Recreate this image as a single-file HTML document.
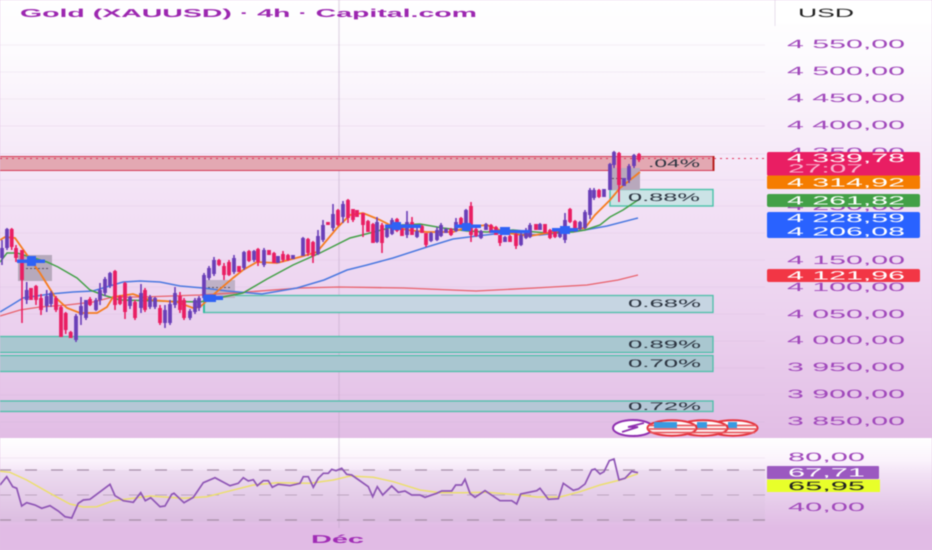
<!DOCTYPE html>
<html lang="fr">
<head>
<meta charset="utf-8">
<title>Gold (XAUUSD) - 4h - Capital.com</title>
<style>
html,body{margin:0;padding:0;width:932px;height:550px;overflow:hidden;background:#e2bde5}
svg{display:block;position:absolute;left:0;top:0;filter:blur(.4px)}
text{font-family:"Liberation Sans",sans-serif;text-rendering:geometricPrecision}
.ax{font-size:12px;fill:#a048bb}
.tg{font-size:12px;fill:#fff}
.zn{font-size:11px;fill:#2c3440}
</style>
</head>
<body>
<svg width="932" height="550" viewBox="0 0 932 550" xmlns="http://www.w3.org/2000/svg">
<defs>
<linearGradient id="m" x1="0" y1="0" x2="0" y2="1">
<stop offset="0" stop-color="#ffffff"/><stop offset=".12" stop-color="#fdfbfe"/><stop offset=".45" stop-color="#f3e2f6"/><stop offset=".75" stop-color="#ebd0ee"/><stop offset="1" stop-color="#e2bde5"/>
</linearGradient>
<linearGradient id="r" x1="0" y1="0" x2="0" y2="1">
<stop offset="0" stop-color="#ffffff"/><stop offset=".25" stop-color="#fbf3fc"/><stop offset=".4" stop-color="#f2e2f5"/><stop offset=".72" stop-color="#e6cbea"/><stop offset="1" stop-color="#e1bbe5"/>
</linearGradient>
<linearGradient id="b" x1="0" y1="0" x2="0" y2="1">
<stop offset="0" stop-color="#eddcf0"/><stop offset="1" stop-color="#dcbde1"/>
</linearGradient>
</defs>

<rect width="932" height="438" fill="url(#m)"/>
<rect y="438" width="932" height="112" fill="#e1bbe5"/>
<rect y="438" width="932" height="90" fill="url(#r)"/>
<rect y="470" width="765" height="52" fill="url(#b)"/>

<!-- grid -->
<path d="M0 45H765M0 72H765M0 99H765M0 126H765M0 154H765M0 180H765M0 206H765M0 233H765M0 260H765M0 287H765M0 314H765M0 341H765M0 368H765M0 395H765M0 422H765M0 458H765" stroke="#c9a8cf" stroke-opacity=".16" fill="none"/>
<path d="M339 0V528" stroke="#bfa6c6" stroke-opacity=".4" stroke-width="1.4"/>
<path d="M775 0V26" stroke="#e9e0ec"/>

<!-- zones -->
<rect x="-2" y="156.5" width="715" height="14" fill="#e3a8b2" stroke="#d33a55" stroke-width="1"/>
<path d="M713.5 156V171" stroke="#b8201f" stroke-width="2"/>
<path d="M0 158.5H765" stroke="#e0305a" stroke-width="1" stroke-dasharray="2 4"/>
<rect x="610" y="189.5" width="103" height="16.5" fill="#cbe3e6" stroke="#49c2a9" stroke-width="1.4"/>
<rect x="204" y="295.5" width="509" height="17" fill="#c6d5e2" stroke="#4dbfa9" stroke-width="1.3"/>
<path d="M204 295V313" stroke="#33bb9f" stroke-width="2"/>
<rect x="-2" y="336.5" width="715" height="16" fill="#a9c7d0" stroke="#4dbfa9" stroke-width="1.3"/>
<rect x="-2" y="355.5" width="715" height="16" fill="#a9c6d0" stroke="#4dbfa9" stroke-width="1.3"/>
<rect x="-2" y="401" width="715" height="10.5" fill="#b5c7d6" stroke="#4dbfa9" stroke-width="1.3"/>

<!-- grey boxes -->
<rect x="18" y="255" width="34" height="26" fill="#b6a9bc"/>
<rect x="206" y="280" width="29" height="18" fill="#bfb1c6"/>
<rect x="610" y="168" width="30" height="22" fill="#b8a8bc"/>
<path d="M26 268.500H49M208 287.500H232M612 178.500H630" stroke="#5b5060" stroke-width="1" stroke-dasharray="2 2"/>

<!-- moving averages -->
<path d="M0 316L20 310 40 307 67 305 93 302 113 297 143 297 200 295 233 293 300 288 339 287 404 288 476 291 535 288 587 285 618 280 638 275" fill="none" stroke="#e8606a" stroke-width="1.300"/>
<path d="M0 312L10 306 23 298 50 294 73 292 93 291 113 285 123 282 140 281 160 282 180 286 203 288 227 291 262 294 297 288 324 280 347 270 367 265 393 258 427 247 453 239 477 236 503 233 540 235 567 232 585 230 607 226 638 218" fill="none" stroke="#4a78e0" stroke-width="1.500"/>
<path d="M0 262L7 253 17 253 47 262 58 267 77 278 90 290 103 295 120 300 200 302 223 297 243 293 267 279 293 265 320 253 350 238 370 233 400 225 420 224 443 228 467 231 487 232 513 230 547 233 573 232 585 230 600 225 610 217 623 210 638 200" fill="none" stroke="#43a047" stroke-width="1.500"/>
<path d="M0 240L5 237 15 238 27 255 40 273 55 297 67 308 80 313 97 313 107 307 113 297 133 294 150 300 177 302 193 308 200 307 213 295 233 278 243 270 257 262 277 263 300 257 317 252 337 228 350 215 363 213 380 220 390 225 407 230 427 232 453 232 467 227 487 225 507 233 530 236 547 233 567 230 585 228 595 215 610 200 620 188 640 172" fill="none" stroke="#f57c1f" stroke-width="1.800"/>

<!-- candles purple -->
<path fill="none" stroke="#6a3fb8" stroke-width="1.600" d="M2 240V265M7 228V250M26.700 282V304M46.700 290V312M51 291V307M76 314V342M81 297V325M86 300V320M96 298V311M100 283V305M105 277V296M110 272V288M130 296V309M141 284V313M150 295V309M155 297V309M165 305V328M170 300V325M175 287V308M190 309V320M195 298V314M199 296V311M204 273V300M209 266V280M214 257V276M234 255V274M244 251V270M254 250V262M264 248V267M278 256V263M293 255V259M303 237V256M318 230V255M323 220V242M333 204V231M343 201V223M377 217V243M387 227V238M392 218V235M407 211V238M417 228V238M431 232V242M437 227V241M441 223V237M446 228V233M456 218V232M466 209V223M481 230V239M486 223V230M505 236V242M521 230V246M526 228V239M530 223V238M540 223V230M560 230V238M565 213V243M580 221V230M585 210V229M590 188V219M594 188V200M604 189V197M610 163V190M614 151V168M624 178V186M629 164V183M634 154V168"/>
<path fill="none" stroke="#6a3fb8" stroke-width="3.800" d="M2 248V258M7 229V248M26.700 290V300M46.700 296V306M51 293V304M76 316V340M81 306V315M86 300V318M96 300V310M100 290V300M105 279V293M110 273V286M130 297V306M141 293V308M150 297V307M155 298V307M165 310V323M170 304V323M175 293V305M190 311V318M195 300V312M199 298V308M204 275V298M209 268V278M214 260V274M234 258V272M244 252V268M254 251V260M264 250V265M278 256V263M293 255V259M303 238V256M318 236V254M323 225V240M333 214V228M343 204V217M377 222V242M387 229V237M392 220V234M407 222V235M417 231V237M431 233V241M437 230V240M441 225V236M446 229V233M456 222V231M466 210V223M481 231V238M486 224V230M505 237V242M521 235V245M526 230V238M530 225V237M540 224V230M560 231V237M565 220V240M580 222V229M585 212V228M590 190V215M594 190V198M604 189V197M610 164V190M614 152V165M624 178V186M629 166V180M634 155V166"/>
<!-- candles pink -->
<path fill="none" stroke="#e91e63" stroke-width="1.600" d="M11.700 228V250M16 245V262M22 250V323M31 288V300M36 285V305M41 294V315M56 296V312M61 306V337M65.700 312V334M70.700 331V338M90 297V306M115 270V310M120 295V305M125 282V319M135 300V320M145 288V312M160 305V325M180 292V313M184 298V320M219 259V266M224 263V280M229 260V276M239 266V272M249 250V262M258 248V266M269 250V255M274 252V263M283 251V262M288 254V261M308 238V256M313 241V263M328 222V225M338 209V226M348 199V223M353 209V222M357 210V217M363 213V237M368 220V232M373 223V243M382 223V253M397 218V232M402 228V236M412 217V235M422 225V233M426 233V247M451 228V236M461 217V225M471 202V242M476 228V237M491 224V233M496 226V235M500 235V246M510 235V242M516 233V249M536 224V230M545 224V233M550 229V239M555 229V238M570 208V223M575 220V232M599 189V198M619 152V202M639 153V162"/>
<path fill="none" stroke="#e91e63" stroke-width="3.800" d="M11.700 229V247M16 248V258M22 250V280M31 288V300M36 286V300M41 298V310M56 298V310M61 307V337M65.700 313V330M70.700 332V338M90 299V305M115 271V305M120 296V304M125 283V312M135 302V318M145 290V310M160 308V323M180 296V310M184 300V318M219 260V265M224 266V275M229 262V275M239 266V272M249 251V261M258 249V262M269 250V255M274 253V263M283 254V260M288 255V260M308 239V253M313 242V256M328 222V225M338 210V225M348 200V218M353 209V220M357 210V217M363 213V225M368 221V232M373 224V243M382 225V243M397 219V231M402 229V236M412 222V235M422 226V233M426 233V245M451 229V235M461 218V225M471 206V235M476 229V236M491 225V233M496 227V235M500 235V243M510 236V242M516 234V246M536 224V230M545 224V233M550 230V238M555 230V237M570 209V222M575 221V231M599 190V197M619 153V185M639 154V160"/>

<!-- blue markers -->
<g fill="#2f62f5">
<rect x="17" y="259.500" width="28" height="3.500"/><rect x="27" y="256" width="9" height="10"/>
<rect x="203" y="296" width="20" height="4"/><rect x="204" y="294.500" width="12" height="7.500"/>
<rect x="385" y="224.500" width="36" height="3.500"/><rect x="392" y="222" width="9" height="8"/>
<rect x="455" y="224.500" width="26" height="3.500"/><rect x="462" y="223" width="9" height="8"/>
<rect x="490" y="230" width="40" height="3"/><rect x="500" y="227" width="10" height="8"/>
<rect x="552" y="228" width="26" height="3.500"/><rect x="560" y="226" width="10" height="8"/>
</g>

<!-- zone labels -->
<text class="zn" x="648" y="167" textLength="52" lengthAdjust="spacingAndGlyphs">.04%</text>
<text class="zn" x="628" y="201" textLength="72" lengthAdjust="spacingAndGlyphs">0.88%</text>
<text class="zn" x="628" y="307" textLength="73" lengthAdjust="spacingAndGlyphs">0.68%</text>
<text class="zn" x="628" y="348" textLength="73" lengthAdjust="spacingAndGlyphs">0.89%</text>
<text class="zn" x="628" y="367" textLength="73" lengthAdjust="spacingAndGlyphs">0.70%</text>
<text class="zn" x="628" y="410" textLength="73" lengthAdjust="spacingAndGlyphs">0.72%</text>

<!-- header -->
<text x="20" y="17" font-size="11.500" font-weight="700" fill="#9c27b0" textLength="457" lengthAdjust="spacingAndGlyphs">Gold (XAUUSD) · 4h · Capital.com</text>
<rect x="776" y="0" width="156" height="24" fill="#ffffff" fill-opacity=".7"/>
<text x="798" y="17" font-size="12" fill="#222" textLength="56" lengthAdjust="spacingAndGlyphs">USD</text>

<!-- price axis -->
<g class="ax">
<text class="ax" x="787" y="48" textLength="118" lengthAdjust="spacingAndGlyphs">4 550,00</text>
<text class="ax" x="787" y="75" textLength="118" lengthAdjust="spacingAndGlyphs">4 500,00</text>
<text class="ax" x="787" y="102" textLength="118" lengthAdjust="spacingAndGlyphs">4 450,00</text>
<text class="ax" x="787" y="129" textLength="118" lengthAdjust="spacingAndGlyphs">4 400,00</text>
<text class="ax" x="787" y="156" textLength="118" lengthAdjust="spacingAndGlyphs">4 350,00</text>
<text class="ax" x="787" y="210" textLength="118" lengthAdjust="spacingAndGlyphs">4 250,00</text>
<text class="ax" x="787" y="264" textLength="118" lengthAdjust="spacingAndGlyphs">4 150,00</text>
<text class="ax" x="787" y="291" textLength="118" lengthAdjust="spacingAndGlyphs">4 100,00</text>
<text class="ax" x="787" y="318" textLength="118" lengthAdjust="spacingAndGlyphs">4 050,00</text>
<text class="ax" x="787" y="344" textLength="118" lengthAdjust="spacingAndGlyphs">4 000,00</text>
<text class="ax" x="787" y="371" textLength="118" lengthAdjust="spacingAndGlyphs">3 950,00</text>
<text class="ax" x="787" y="398" textLength="118" lengthAdjust="spacingAndGlyphs">3 900,00</text>
<text class="ax" x="787" y="425" textLength="118" lengthAdjust="spacingAndGlyphs">3 850,00</text>
</g>

<!-- price tags -->
<rect x="767" y="152" width="153" height="24" rx="2" fill="#e91e63"/>
<rect x="767" y="175.500" width="153" height="13.500" rx="1.500" fill="#f57c00"/>
<rect x="767" y="194" width="153" height="13" rx="2" fill="#43a047"/>
<rect x="767" y="212" width="153" height="26" rx="2" fill="#2962ff"/>
<rect x="767" y="269" width="153" height="13" rx="2" fill="#f23645"/>
<text class="tg" x="787" y="162" textLength="118" lengthAdjust="spacingAndGlyphs">4 339,78</text>
<text class="tg" x="788" y="172.500" textLength="75" lengthAdjust="spacingAndGlyphs" style="fill:#f8b4cf">27:07</text>
<text class="tg" x="787" y="186.500" textLength="118" lengthAdjust="spacingAndGlyphs">4 314,92</text>
<text class="tg" x="787" y="204.500" textLength="118" lengthAdjust="spacingAndGlyphs">4 261,82</text>
<text class="tg" x="787" y="222" textLength="118" lengthAdjust="spacingAndGlyphs">4 228,59</text>
<text class="tg" x="787" y="235.500" textLength="118" lengthAdjust="spacingAndGlyphs">4 206,08</text>
<text class="tg" x="787" y="279.500" textLength="118" lengthAdjust="spacingAndGlyphs">4 121,96</text>

<!-- event badges -->
<ellipse cx="733" cy="428" rx="24.500" ry="7.700" fill="#fff" stroke="#e5323c" stroke-width="2"/>
<path d="M710 425.500H756M709 429H757M711 432.500H755" stroke="#e85a60" stroke-width="1.800"/>
<rect x="728" y="422" width="9" height="6" fill="#3a9ae0"/>
<ellipse cx="703" cy="428" rx="24.500" ry="7.700" fill="#fff" stroke="#e5323c" stroke-width="2"/>
<path d="M680 425.500H726M679 429H727M681 432.500H725" stroke="#e85a60" stroke-width="1.800"/>
<rect x="697" y="422" width="10" height="6" fill="#3a9ae0"/>
<ellipse cx="633" cy="428" rx="20" ry="8" fill="#fff" stroke="#8e2fb0" stroke-width="2"/>
<path d="M622 432L638 427 628 427 644 423" fill="none" stroke="#8e2fb0" stroke-width="1.800"/>
<ellipse cx="672" cy="428" rx="24.500" ry="7.700" fill="#fff" stroke="#e5323c" stroke-width="2"/>
<path d="M649 425.500H695M648 429H696M650 432.500H694" stroke="#e85a60" stroke-width="1.800"/>
<rect x="654" y="422" width="23" height="6" fill="#3a9ae0"/>

<!-- RSI dashes -->
<path d="M-1 470H765M-1 520H765" stroke="#a78fa9" stroke-width="1.200" stroke-dasharray="12 14" fill="none"/>
<path d="M-1 495H765" stroke="#bda6c0" stroke-width="1" stroke-dasharray="12 14" fill="none"/>

<!-- RSI lines -->
<path fill="none" stroke="#ecdf6e" stroke-width="1.500" d="M0 471.300L10 472.300 26.700 480 50 493.300 70 504 83.300 507 96.700 506.700 113.300 500.700 133.300 498.300 150 496 183.300 498.300 206.700 496.700 226.700 491.700 253.300 485 276.700 482.700 310 483.300 333.300 480 350 476 373.300 477.300 393.300 481.700 420 490 440 492.700 463 492.700 486.700 492.300 520 495 536.700 497 560 497 580 491.700 600 485 620 480 638 473.700"/>
<path fill="none" stroke="#8e55b5" stroke-width="1.700" d="M0 485L6.700 476.700 12.700 486.700 16.700 488.300 21.700 506 26.700 502.700 35 505 41.700 508.300 50 505.700 58.300 511 65 516.700 71.700 518 78.300 503.300 83.300 500 90 499.300 110 484.300 115 495.700 123.300 500.700 133.300 502.300 140.700 492.700 145.300 500.700 150.700 497.700 160 506.700 165 506 171.700 494.300 174 493.300 184 502.700 193.300 497.300 203.300 482.700 215 477.700 230 485.700 238.300 483.300 243.300 477.700 248.300 481 253.300 479.700 257.300 485.700 263.300 480.700 268.300 480.700 272.300 487.300 278.300 484.300 290 485.700 300 483.300 303.300 476.700 308.300 476.700 313.300 487.300 318.300 478.300 323.300 473.300 328.300 473.300 331.700 469.300 336 470.700 341.700 468.300 346.700 474.300 351.700 475 368.300 486.700 372.700 496.700 377.300 486.700 382.700 495 391.700 486 398.300 492.300 405 491 411.700 495 420 495 425 497.300 436.700 493.300 441.700 491 451.700 491 455.700 485 461.700 485 465 479.300 470 493.300 475 497.300 485 490.700 500 500.700 511.700 500.700 516.700 504 520.700 494 536.700 490.700 540 488.300 548.300 499.300 558.300 498.700 563.300 483.300 573.300 490.300 578.300 489 585 484 591.700 470 595 469 600 474 604 471.700 609.300 460.700 614 459 619 480 625 478.300 631.700 471.300 638 472.700"/>

<!-- RSI axis -->
<text class="ax" x="788" y="461" textLength="77" lengthAdjust="spacingAndGlyphs">80,00</text>
<rect x="767" y="466" width="112" height="13" rx="1" fill="#9b59c0"/>
<rect x="767" y="479.500" width="113" height="12.500" fill="#e8ff2a"/>
<text class="tg" x="788" y="476.500" textLength="77" lengthAdjust="spacingAndGlyphs">67,71</text>
<text x="788" y="490" font-size="12" fill="#222" textLength="77" lengthAdjust="spacingAndGlyphs">65,95</text>
<text class="ax" x="788" y="511" textLength="77" lengthAdjust="spacingAndGlyphs">40,00</text>

<text x="311" y="543" font-size="11.500" font-weight="700" fill="#a02cb5" textLength="53" lengthAdjust="spacingAndGlyphs">Déc</text>
</svg>
</body>
</html>
